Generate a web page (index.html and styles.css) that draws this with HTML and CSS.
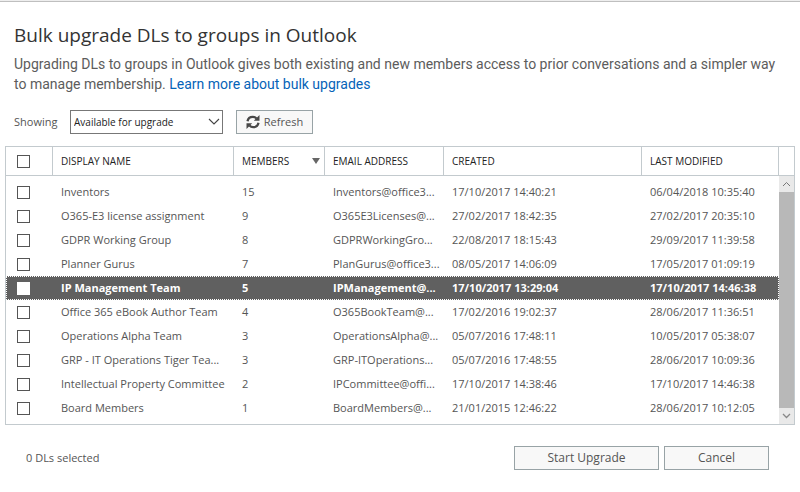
FILE: index.html
```html
<!DOCTYPE html>
<html lang="en">
<head>
<meta charset="utf-8">
<title>Bulk upgrade DLs to groups in Outlook</title>
<link rel="stylesheet" href="styles.css">
</head>
<body>
<main class="dialog">
  <header class="intro">
    <h1>Bulk upgrade DLs to groups in Outlook</h1>
    <p>Upgrading DLs to groups in Outlook gives both existing and new members access to prior conversations and a simpler way to manage membership. <a href="#">Learn more about bulk upgrades</a></p>
  </header>

  <div class="toolbar">
    <label for="showing">Showing</label>
    <div class="select">
      <select id="showing"><option>Available for upgrade</option></select>
      <svg class="select-arrow" width="12" height="8" viewBox="0 0 12 8" aria-hidden="true"><path d="M1 1l5 5 5-5" fill="none" stroke="#444" stroke-width="1.1"/></svg>
    </div>
    <button class="btn refresh" type="button">
      <svg width="14" height="14" viewBox="0 0 14 14" aria-hidden="true"><g fill="none" stroke="#484848" stroke-width="2.3"><path d="M1.5 6.2C2 3.500 4.200 1.800 6.800 1.800c1.600 0 2.800.6 3.700 1.600"/><path d="M12.500 7.800c-.5 2.700-2.700 4.400-5.300 4.400-1.600 0-2.800-.6-3.700-1.600"/></g><path d="M13.500 0v5.700H7.800zM.5 14V8.300h5.700z" fill="#484848"/></svg>
      <span>Refresh</span>
    </button>
  </div>

  <section class="list">
    <table>
      <colgroup><col class="c-check"><col class="c-name"><col class="c-members"><col class="c-email"><col class="c-created"><col></colgroup>
      <thead>
        <tr>
          <th class="check"><input type="checkbox" aria-label="Select all"></th>
          <th>DISPLAY NAME</th>
          <th><span class="sorted">MEMBERS <svg width="8" height="6" viewBox="0 0 8 6" aria-hidden="true"><path d="M0 0h8L4 6z" fill="#666"/></svg></span></th>
          <th>EMAIL ADDRESS</th>
          <th>CREATED</th>
          <th>LAST MODIFIED</th>
        </tr>
      </thead>
      <tbody>
        <tr><td class="check"><input type="checkbox" aria-label="Inventors"></td><td>Inventors</td><td>15</td><td>Inventors@office3...</td><td>17/10/2017 14:40:21</td><td>06/04/2018 10:35:40</td></tr>
        <tr><td class="check"><input type="checkbox" aria-label="O365-E3 license assignment"></td><td>O365-E3 license assignment</td><td>9</td><td>O365E3Licenses@...</td><td>27/02/2017 18:42:35</td><td>27/02/2017 20:35:10</td></tr>
        <tr><td class="check"><input type="checkbox" aria-label="GDPR Working Group"></td><td>GDPR Working Group</td><td>8</td><td>GDPRWorkingGro...</td><td>22/08/2017 18:15:43</td><td>29/09/2017 11:39:58</td></tr>
        <tr><td class="check"><input type="checkbox" aria-label="Planner Gurus"></td><td>Planner Gurus</td><td>7</td><td>PlanGurus@office3...</td><td>08/05/2017 14:06:09</td><td>17/05/2017 01:09:19</td></tr>
        <tr class="current"><td class="check"><input type="checkbox" aria-label="IP Management Team"></td><td>IP Management Team</td><td>5</td><td>IPManagement@...</td><td>17/10/2017 13:29:04</td><td>17/10/2017 14:46:38</td></tr>
        <tr><td class="check"><input type="checkbox" aria-label="Office 365 eBook Author Team"></td><td>Office 365 eBook Author Team</td><td>4</td><td>O365BookTeam@...</td><td>17/02/2016 19:02:37</td><td>28/06/2017 11:36:51</td></tr>
        <tr><td class="check"><input type="checkbox" aria-label="Operations Alpha Team"></td><td>Operations Alpha Team</td><td>3</td><td>OperationsAlpha@...</td><td>05/07/2016 17:48:11</td><td>10/05/2017 05:38:07</td></tr>
        <tr><td class="check"><input type="checkbox" aria-label="GRP - IT Operations Tiger Team"></td><td>GRP - IT Operations Tiger Tea...</td><td>3</td><td>GRP-ITOperations...</td><td>05/07/2016 17:48:55</td><td>28/06/2017 10:09:36</td></tr>
        <tr><td class="check"><input type="checkbox" aria-label="Intellectual Property Committee"></td><td>Intellectual Property Committee</td><td>2</td><td>IPCommittee@offi...</td><td>17/10/2017 14:38:46</td><td>17/10/2017 14:46:38</td></tr>
        <tr><td class="check"><input type="checkbox" aria-label="Board Members"></td><td>Board Members</td><td>1</td><td>BoardMembers@...</td><td>21/01/2015 12:46:22</td><td>28/06/2017 10:12:05</td></tr>
      </tbody>
    </table>
    <div class="side">
      <div class="side-head"></div>
      <div class="scrollbar">
        <button type="button" aria-label="Scroll up"><svg width="9" height="6" viewBox="0 0 9 6" aria-hidden="true"><path d="M1 5l3.500-3.500L8 5" fill="none" stroke="#777"/></svg></button>
        <div class="thumb"></div>
        <button type="button" aria-label="Scroll down"><svg width="9" height="6" viewBox="0 0 9 6" aria-hidden="true"><path d="M1 1l3.500 3.500L8 1" fill="none" stroke="#888" stroke-width="1.300"/></svg></button>
      </div>
    </div>
  </section>

  <footer class="footer">
    <span class="status">0 DLs selected</span>
    <button class="btn start" type="button">Start Upgrade</button>
    <button class="btn cancel" type="button">Cancel</button>
  </footer>
</main>
</body>
</html>
```
FILE: styles.css
```css
* { box-sizing: border-box; }
html { background: #fff; }
body {
  margin: 0;
  color: #555;
  font: 11px/16px "Open Sans", "Noto Sans", sans-serif;
}
button, select, input { font: inherit; color: inherit; margin: 0; }
.dialog {
  border-top: 1px solid #bfbfbf;
  box-shadow: 0 -1px #eee;
  margin-top: 1px;
  padding: 20px 5px 0;
}
.intro { padding: 0 9px; }
h1 {
  margin: 0 0 6px;
  font-size: 19px;
  line-height: 26px;
  font-weight: 400;
  color: #333;
}
.intro p {
  margin: 0;
  font-family: Roboto, "Open Sans", sans-serif;
  font-size: 14px;
  line-height: 20px;
  color: #5c5c5c;
}
a { color: #0563b8; text-decoration: none; }

.toolbar {
  display: flex;
  align-items: center;
  padding-left: 9px;
  margin: 16px 0 12px;
}
.toolbar label { width: 56px; }
.select { position: relative; width: 153px; margin-right: 13px; }
.select select {
  display: block;
  width: 100%;
  height: 24px;
  padding: 0 3px;
  border: 1px solid #777;
  border-radius: 0;
  background: #fff;
  color: #222;
  font-size: 10px;
  appearance: none;
}
.select-arrow { position: absolute; right: 3px; top: 8px; pointer-events: none; }

.btn {
  height: 24px;
  padding: 0;
  border: 1px solid #98a3a6;
  border-radius: 0;
  background: #f8f8f8;
  font-size: 12px;
}
.refresh {
  display: flex;
  align-items: center;
  justify-content: center;
  gap: 4px;
  width: 77px;
  font-size: 11px;
}

.list {
  display: flex;
  align-items: stretch;
  border: 1px solid #c3cace;
}
table {
  flex: 1;
  width: 0;
  margin-bottom: 4px;
  table-layout: fixed;
  border-collapse: separate;
  border-spacing: 0;
}
.c-check { width: 47px; }
.c-name { width: 181px; }
.c-members { width: 91px; }
.c-email { width: 119px; }
.c-created { width: 198px; }
th, td {
  height: 24px;
  padding: 0 0 0 8px;
  text-align: left;
  white-space: nowrap;
  overflow: hidden;
}
th {
  height: 29px;
  border-bottom: 1px solid #c3cace;
  border-right: 1px solid #c3cace;
  font-size: 10px;
  font-weight: 400;
  color: #222;
}
tbody::before { content: ""; display: table-row; height: 4px; }
.check { padding-left: 11px; }
.sorted {
  display: flex;
  align-items: center;
  justify-content: space-between;
  padding-right: 4px;
}
input[type="checkbox"] {
  display: block;
  width: 13px;
  height: 13px;
  appearance: none;
  border: 1px solid #555;
  background: #fff;
}
.current {
  background: #606060;
  color: #fff;
  font-weight: 700;
  outline: 1px dotted #fff;
  outline-offset: -1px;
}
.current input[type="checkbox"] { border-color: #fff; }

.side { display: flex; flex-direction: column; width: 15px; }
.side-head { height: 29px; border-bottom: 1px solid #c3cace; }
.scrollbar {
  flex: 1;
  display: flex;
  flex-direction: column;
  background: #e9e9e9;
}
.scrollbar button {
  display: grid;
  place-items: center;
  height: 16px;
  padding: 0;
  border: 0;
  background: #e9e9e9;
}
.thumb { flex: 1; background: #b8b8b8; }

.footer {
  display: flex;
  align-items: center;
  gap: 5px;
  padding: 21px 26px 20px 21px;
}
.status { flex: 1; }
.start { width: 145px; }
.cancel { width: 105px; }
```
